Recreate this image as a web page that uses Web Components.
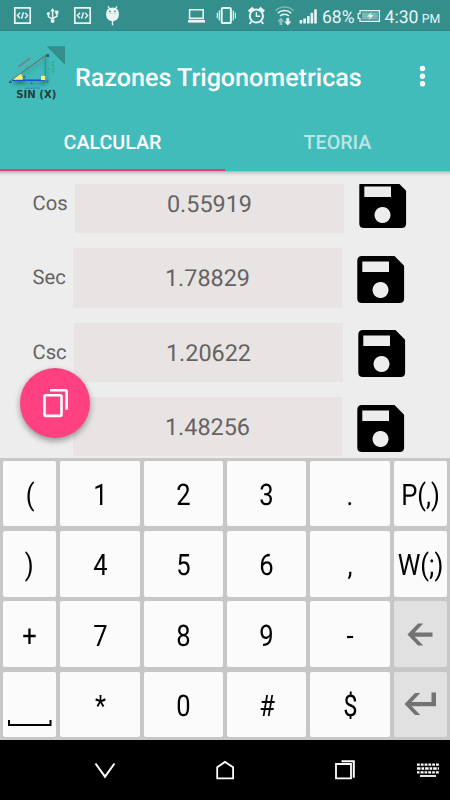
<!DOCTYPE html>
<html lang="es">
<head>
<meta charset="utf-8">
<title>Razones Trigonometricas</title>
<style>
  body {
    margin: 0;
    width: 450px;
    height: 800px;
    overflow: hidden;
    font-family: Roboto, sans-serif;
    text-rendering: geometricPrecision;
  }
</style>
</head>
<body>
<trig-app></trig-app>

<script>
const define = (name, html) => {
  const template = document.createElement("template");
  template.innerHTML = html;

  window.customElements.define(name, class extends HTMLElement {
    constructor() {
      super();
      this.attachShadow({ mode: "open" });
      this.shadowRoot.appendChild(template.content.cloneNode(true));
    }
  });
};

define("status-bar", `
  <style>
    :host {
      display: block;
      height: 31px;
      background: #338e8c;
      color: #e9f5f4;
    }
    svg { display: block; }
    text { font-family: Roboto, sans-serif; fill: currentColor; }
  </style>
  <svg width="450" height="31" fill="none" stroke="currentColor">
    <rect y="30" width="450" height="1" fill="#2f8582" stroke="none"/>
    <g stroke-width="1.4">
      <path d="M14.8 7.8h15.4v15.4H14.8z" stroke-width="1.7"/>
      <path d="M20 12.8l-2.6 2.7 2.6 2.7M25 12.8l2.6 2.7-2.6 2.7M23.4 12.3l-1.8 6.4"/>
    </g>
    <g stroke-width="1.4" transform="translate(60 0)">
      <path d="M14.8 7.8h15.4v15.4H14.8z" stroke-width="1.7"/>
      <path d="M20 12.8l-2.6 2.7 2.6 2.7M25 12.8l2.6 2.7-2.6 2.7M23.4 12.3l-1.8 6.4"/>
    </g>
    <g stroke-width="1.5">
      <path d="M52.6 10v11M52.6 18.6l4.3-2.4v-4M52.6 19.5l-4.2-2.8v-3"/>
      <path d="M52.6 8l2.3 3.6h-4.6z" fill="currentColor" stroke="none"/>
      <circle cx="52.6" cy="21" r="2" fill="currentColor" stroke="none"/>
      <circle cx="48.4" cy="13.6" r="1.6" fill="currentColor" stroke="none"/>
      <path d="M55.2 10.6h3.2v3.2h-3.2z" fill="currentColor" stroke="none"/>
    </g>
    <g fill="currentColor" stroke="none">
      <path d="M106 13.2h13c0 5-2.2 7.8-6.5 7.8s-6.5-2.8-6.5-7.8z"/>
      <path d="M106 13.4a6.5 5.8 0 0 1 13 0z"/>
      <path d="M108 6.3l2 3M117 6.3l-2 3M112.5 20v5.3" stroke="currentColor" stroke-width="1.4"/>
      <circle cx="110" cy="11.3" r=".9" fill="#338e8c"/><circle cx="115" cy="11.3" r=".9" fill="#338e8c"/>
    </g>
    <path d="M189.6 9.8h13.6v8.6h-13.6z" stroke-width="1.6"/>
    <path d="M188 20h17v2.6h-17z" fill="currentColor" stroke="none"/>
    <rect x="221.7" y="7.9" width="9.2" height="15.2" rx="1.2" stroke-width="2"/>
    <path d="M219.3 10.4v10.2M217.3 12.8v5.4M233.3 10.4v10.2M235.4 12.8v5.4" stroke-width="1.2"/>
    <circle cx="256.4" cy="16" r="6.6" stroke-width="2"/>
    <path d="M256.4 12v4.3h3.8" stroke-width="1.4"/>
    <path d="M248.7 11.5l4.5-3.8M264.1 11.5l-4.5-3.8" stroke-width="2.6"/>
    <path d="M251.5 21.5l-2 2.3M261.3 21.5l2 2.3" stroke-width="1.8"/>
    <g stroke-width="1.5">
      <path d="M275.5 10.6a13 13 0 0 1 18 0" opacity=".4"/>
      <path d="M277.7 13.2a10 10 0 0 1 13.6 0"/>
      <path d="M280 16a6.6 6.6 0 0 1 9 0"/>
      <path d="M280.8 17.5l3.6 4h-2.2v3.5h-2.8v-3.5h-2.2z" fill="currentColor" stroke="none" opacity=".5"/>
      <path d="M287.8 25.5l-3.6-4h2.2v-3.5h2.8v3.5h2.2z" fill="currentColor" stroke="none"/>
    </g>
    <path d="M299.6 20h2.6v3.4h-2.6zM303.3 18.6h2.6v4.8h-2.6zM307 16h2.6v7.4H307zM310.6 12.8h2.6v10.6h-2.6zM314.2 9.2h2.6v14.2h-2.6z" fill="currentColor" stroke="none"/>
    <text x="322" y="22.6" font-size="17.8" stroke="none" textLength="32.5" lengthAdjust="spacingAndGlyphs">68%</text>
    <path d="M360 10.7h19.4v10.6H360v-3h-1.8v-4.6h1.8z" stroke-width="1.3"/>
    <path d="M362 12.5h15.7v7H362z" fill="#78b9b6" stroke="none"/>
    <path d="M371.5 11.7l-4.5 5h3l-1.4 3.6 5-5.4h-3z" fill="currentColor" stroke="none"/>
    <text x="384.5" y="22.6" font-size="17.8" stroke="none" textLength="34" lengthAdjust="spacingAndGlyphs">4:30</text>
    <text x="421.8" y="22.6" font-size="12.6" stroke="none" textLength="18.5" lengthAdjust="spacingAndGlyphs">PM</text>
  </svg>
`);

define("app-logo", `
  <style>
    :host { display: block; width: 58px; height: 58px; }
    svg { display: block; overflow: visible; }
    text { font-family: "DejaVu Sans", sans-serif; }
    .shadow { filter: drop-shadow(1px 3px 2px rgba(0, 40, 40, .5)); }
  </style>
  <svg width="58" height="58" viewBox="8 45 58 58">
    <path d="M46.7 46.2H65v18.6z" fill="#338e8c"/>
    <g class="shadow">
      <path d="M12 80l34-25" stroke="#8d5148" stroke-width=".9"/>
      <path d="M45.3 56v23.5" stroke="#17a554" stroke-width="1"/>
      <path d="M12 80.3h33" stroke="#1a50c8" stroke-width="1.4"/>
      <path d="M12.8 79.8l8.2-6q2 2.5 1.8 6z" fill="#fff173"/>
      <path d="M41 75.8h4.3v4.3H41z" fill="#fff173"/>
    </g>
    <text x="46.3" y="56.5" font-size="4" font-weight="bold" fill="#173c3c">B</text>
    <text x="9" y="83" font-size="3.6" font-weight="bold" fill="#173c3c">A</text>
    <text x="46.5" y="83" font-size="3.6" fill="#173c3c">C</text>
    <text x="23" y="78" font-size="3.6" fill="#173c3c">α</text>
    <text x="30.5" y="84" font-size="2.8" font-weight="bold" fill="#1a50c8">b</text>
    <text x="24.5" y="89" font-size="2.6" fill="#1a50c8" textLength="15.5" lengthAdjust="spacingAndGlyphs">(adyacente)</text>
    <text transform="translate(19 68) rotate(-38)" font-size="3.3" fill="#a24c48" textLength="15.5">(hipotenusa)</text>
    <text transform="translate(27 67.8) rotate(-38)" font-size="3" fill="#a24c48">c</text>
    <text transform="translate(49.5 70) rotate(-90)" font-size="3.5" fill="#17a554">a</text>
    <text transform="translate(54 74) rotate(-90)" font-size="3.2" fill="#17a554" textLength="13">(opuesto)</text>
    <text x="16.3" y="98" font-size="11" font-weight="bold" fill="#263c3c" textLength="40" lengthAdjust="spacingAndGlyphs">SIN (X)</text>
  </svg>
`);

define("tool-bar", `
  <style>
    :host {
      display: flex;
      align-items: flex-start;
      height: 82px;
      box-sizing: border-box;
      padding: 14px 23px 0 8px;
      color: #fff;
    }
    h1 {
      flex: 1;
      margin: 19px 0 0 9px;
      font-size: 25.1px;
      line-height: 30px;
      font-weight: 500;
      white-space: nowrap;
    }
    svg { display: block; margin-top: 20px; }
  </style>
  <app-logo></app-logo>
  <h1><slot></slot></h1>
  <svg width="9" height="22" fill="currentColor">
    <circle cx="4.5" cy="3.5" r="2.7"/><circle cx="4.5" cy="11.2" r="2.7"/><circle cx="4.5" cy="18.8" r="2.7"/>
  </svg>
`);

define("tab-item", `
  <style>
    :host {
      display: flex;
      flex: 1;
      justify-content: center;
      box-sizing: border-box;
      height: 58px;
      padding-top: 18px;
      font-size: 19.7px;
      line-height: 24px;
      font-weight: 500;
      color: #b9e5e4;
    }
    :host([selected]) {
      color: #fff;
      border-bottom: 2px solid #ff3377;
    }
  </style>
  <slot></slot>
`);

define("save-icon", `
  <style>
    :host { display: block; width: 48px; height: 48px; }
    svg { display: block; }
  </style>
  <svg width="48" height="48" viewBox="0 0 48 48">
    <path fill-rule="evenodd" d="M5 0H37.5L47.1 9.8V42.5Q47.1 47 42.5 47H5Q.3 47 .3 42.5V5Q.3 0 5 0zM5.3 5.4V16H32V5.4zM23.5 26a8 8 0 1 0 .01 0z"/>
  </svg>
`);

define("ratio-row", `
  <style>
    :host {
      display: flex;
      flex: none;
      align-items: flex-start;
      height: 74.4px;
      color: #646262;
    }
    .label {
      width: var(--label, 40.5px);
      margin: 17px 0 0 32.5px;
      font-size: 20.2px;
      line-height: 24px;
      white-space: nowrap;
    }
    .value {
      width: 269px;
      height: 59.4px;
      background: #e9e4e4;
      text-align: center;
      font-size: 23.4px;
      line-height: 61.8px;
    }
    save-icon { margin: 7.6px 0 0 14.7px; }
  </style>
  <div class="label"><slot name="label"></slot></div>
  <div class="value"><slot></slot></div>
  <save-icon></save-icon>
`);

define("ratio-list", `
  <style>
    :host {
      display: block;
      box-sizing: border-box;
      height: 287px;
      padding-top: 13px;
      background: linear-gradient(#a9b4b4, #d3d3d3 2px, #e5e5e5 4px, #ededed 6px);
    }
    .view {
      display: flex;
      flex-direction: column;
      justify-content: flex-end;
      height: 274px;
      overflow: hidden;
    }
    .view ::slotted(:last-child) { height: 61px; }
  </style>
  <div class="view"><slot></slot></div>
`);

define("copy-fab", `
  <style>
    :host {
      position: absolute;
      left: 20px;
      top: 368px;
      width: 70px;
      height: 70px;
      border-radius: 50%;
      background: #ff4081;
      box-shadow: 0 3px 6px rgba(0, 0, 0, .38);
    }
    svg { display: block; }
  </style>
  <svg width="70" height="70" fill="none" stroke="#fff" stroke-width="2.6">
    <rect x="24.5" y="27.3" width="17" height="20.6" rx="1.3"/>
    <path d="M30 22.3H45.6Q46.6 22.3 46.6 23.3V41.8"/>
  </svg>
`);

define("key-cap", `
  <style>
    :host {
      display: flex;
      align-items: center;
      justify-content: center;
      border-radius: 2px;
      background: #fbfbfb;
      color: #000;
      font-size: 29.7px;
      white-space: nowrap;
    }
    :host([dark]) { background: #e1e1e1; }
    span { display: block; transform: scaleX(.86); padding-top: 4px; }
    :host([dark]) span, :host([wide]) span { transform: none; padding: 0; }
  </style>
  <span><slot></slot></span>
`);

define("num-pad", `
  <style>
    :host {
      display: grid;
      box-sizing: border-box;
      grid-template-columns: 53.3px repeat(4, 1fr) 53.3px;
      grid-template-rows: repeat(4, 1fr);
      gap: 4.9px 4.2px;
      height: 282px;
      padding: 3px;
      background: #c7c7c7;
    }
    svg { display: block; }
  </style>
  <key-cap>(</key-cap><key-cap>1</key-cap><key-cap>2</key-cap><key-cap>3</key-cap><key-cap>.</key-cap><key-cap>P(,)</key-cap>
  <key-cap>)</key-cap><key-cap>4</key-cap><key-cap>5</key-cap><key-cap>6</key-cap><key-cap>,</key-cap><key-cap>W(;)</key-cap>
  <key-cap>+</key-cap><key-cap>7</key-cap><key-cap>8</key-cap><key-cap>9</key-cap><key-cap>-</key-cap>
  <key-cap dark>
    <svg width="53" height="65" fill="#737373"><path d="M13.500 32.500L24 21.500h5.300l-8.600 9H38.500v4.200H20.700l8.600 8.800H24z"/></svg>
  </key-cap>
  <key-cap wide>
    <svg width="53" height="65" fill="none" stroke="#000" stroke-width="2"><path d="M6 48v5h41.5v-5"/></svg>
  </key-cap>
  <key-cap>*</key-cap><key-cap>0</key-cap><key-cap>#</key-cap><key-cap>$</key-cap>
  <key-cap dark>
    <svg width="53" height="65" fill="#737373"><path d="M10.5 32L21 21h5.3l-8.6 9H37.5v-9.5H42v13.7H17.7l8.6 8.8H21z"/></svg>
  </key-cap>
`);

define("nav-bar", `
  <style>
    :host { display: block; height: 60px; background: #000; }
    svg { display: block; }
  </style>
  <svg width="450" height="60" fill="none" stroke="#fff" stroke-width="1.8">
    <path d="M95.5 23.5l9.5 13.2 9.5-13.2" stroke-width="2"/>
    <path d="M217.2 38.3V27.2l7.8-5.3 8.1 5.3v11.1z"/>
    <path d="M336 24h15v14.3h-15z"/>
    <path d="M341.5 21.3h12.3v16.5" stroke-width="2"/>
    <g stroke-width="2.3">
      <path d="M417 24.7h22" stroke-dasharray="2.8 1"/>
      <path d="M417 28.5h22" stroke-dasharray="3.5 1 2.6 1"/>
      <path d="M417 32.3h22" stroke-dasharray="2.6 1 3 1"/>
      <path d="M420 36h16" stroke-width="1.8"/>
    </g>
  </svg>
`);

define("trig-app", `
  <style>
    :host {
      display: block;
      position: relative;
      width: 450px;
      height: 800px;
      overflow: hidden;
    }
    header { background: #42bbbb; }
    nav { display: flex; }
    .first { --label: 42.5px; }
    .mid { --label: 41.5px; }
  </style>
  <status-bar></status-bar>
  <header>
    <tool-bar>Razones Trigonometricas</tool-bar>
    <nav>
      <tab-item selected>CALCULAR</tab-item>
      <tab-item>TEORIA</tab-item>
    </nav>
  </header>
  <ratio-list>
    <ratio-row class="first"><span slot="label">Cos</span>0.55919</ratio-row>
    <ratio-row><span slot="label">Sec</span>1.78829</ratio-row>
    <ratio-row class="mid"><span slot="label">Csc</span>1.20622</ratio-row>
    <ratio-row><span slot="label"></span>1.48256</ratio-row>
  </ratio-list>
  <num-pad></num-pad>
  <nav-bar></nav-bar>
  <copy-fab></copy-fab>
`);
</script>
</body>
</html>
